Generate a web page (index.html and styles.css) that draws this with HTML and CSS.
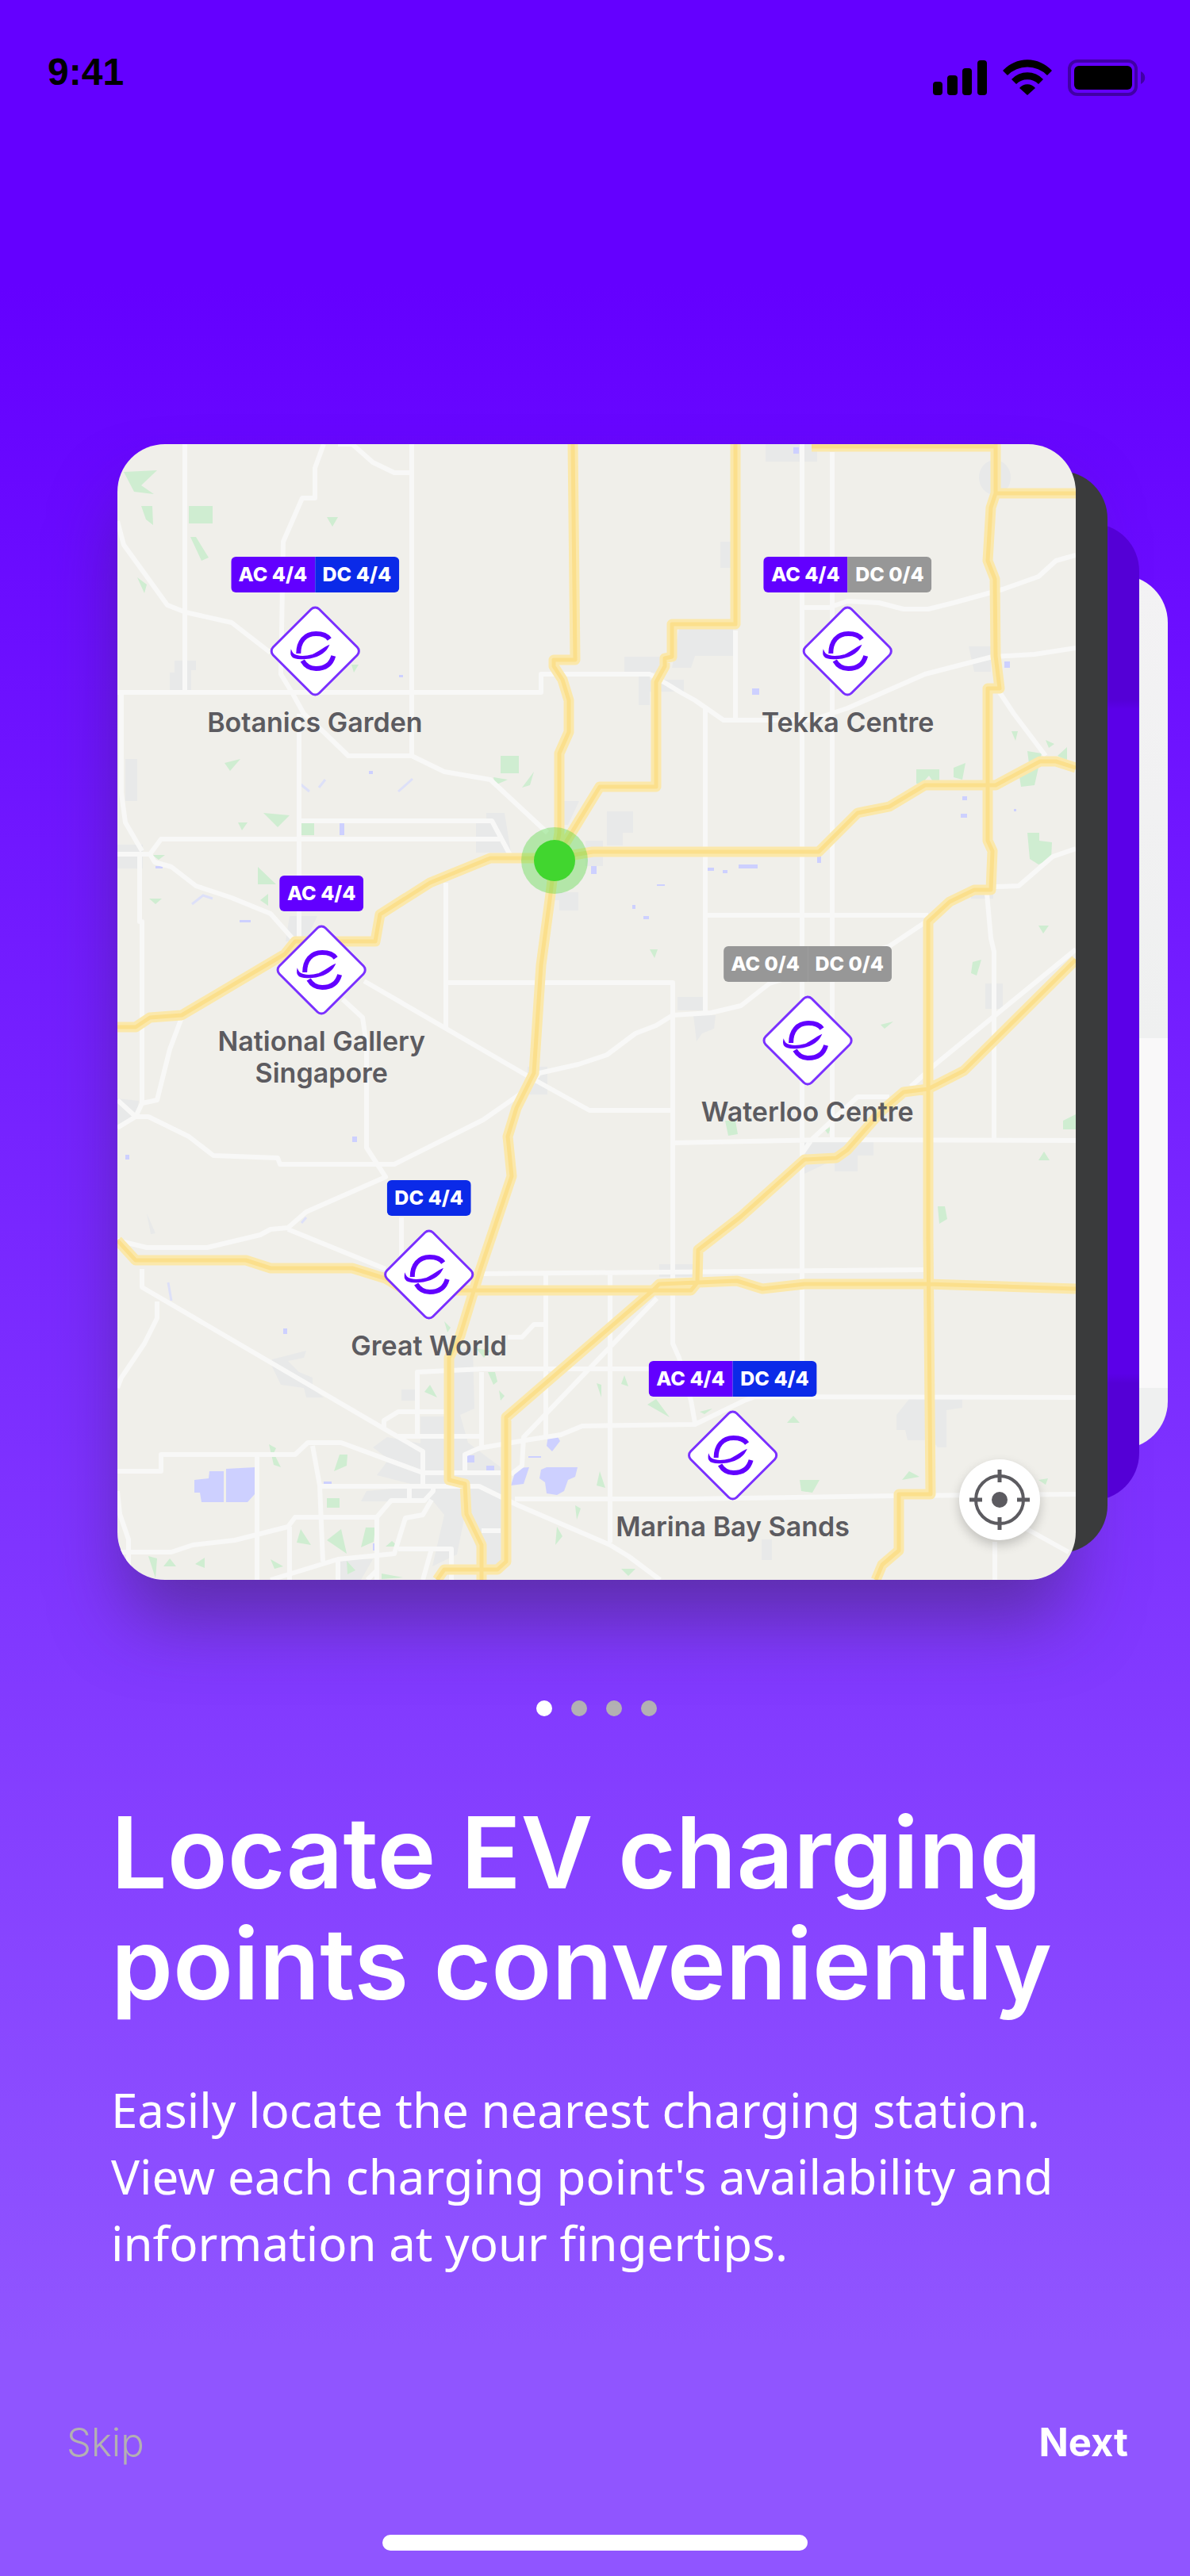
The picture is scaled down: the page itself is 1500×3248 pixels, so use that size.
FILE: index.html
```html
<!DOCTYPE html>
<html lang="en">
<head>
    <meta charset="UTF-8">
    <meta name="viewport" content="width=device-width, initial-scale=1.0">
    <title>Locate EV charging points</title>
    <link rel="stylesheet" href="styles.css">
</head>
<body>
    <!-- shared icon for the station pins -->
    <svg class="sprite" aria-hidden="true">
        <symbol id="station" viewBox="0 0 116 116">
            <rect x="17" y="17" width="82" height="82" rx="7" transform="rotate(45 58 58)" fill="#fff" stroke="#7a30ff" stroke-width="3"/>
            <g fill="none" stroke="#6200ff" stroke-width="6">
                <path d="M76 43 C72 37 66 36 59 36 C45 36 37 46 37 61"/>
                <path d="M42 70 C46 77 52 80 59 80 C70 80 78 75 81 64"/>
            </g>
            <path d="M28 59 C27 67 36 68 46 67 C60 66 70 60 74 52 C68 55 62 60 55 63 C44 66 31 66 28 59Z" fill="#6200ff" stroke="#6200ff" stroke-width="2"/>
        </symbol>
    </svg>

    <div class="screen">
        <header class="status">
            <span class="time">9:41</span>
            <div class="status-icons">
                <svg width="68" height="46" viewBox="0 0 68 46" aria-hidden="true">
                    <rect x="0" y="28" width="12" height="17" rx="4"/>
                    <rect x="18" y="20" width="13" height="25" rx="4"/>
                    <rect x="37" y="11" width="12" height="34" rx="4"/>
                    <rect x="56" y="1" width="12" height="44" rx="4"/>
                </svg>
                <svg width="62" height="46" viewBox="0 0 62 46" aria-hidden="true">
                    <path d="M0 14A42 42 0 0 1 62 14L56 20A35 35 0 0 0 6 20Z"/>
                    <path d="M11 25A27 27 0 0 1 51 25L45 31A20 20 0 0 0 17 31Z"/>
                    <path d="M21 36A13 13 0 0 1 41 36L31 45Z"/>
                </svg>
                <svg width="98" height="46" viewBox="0 0 98 46" aria-hidden="true">
                    <rect x="2" y="2" width="84" height="42" rx="10" fill="none" stroke="#000" stroke-width="4" opacity=".35"/>
                    <rect x="8" y="8" width="73" height="30" rx="6"/>
                    <path d="M92 15C99 18 99 28 92 31Z" opacity=".35"/>
                </svg>
            </div>
        </header>

        <main class="content">
            <div class="stack">
                <div class="card card-white"></div>
                <div class="card card-purple"></div>
                <div class="card card-dark"></div>
                <div class="map">
                    <svg class="map-art" viewBox="148 560 1208 1432" aria-hidden="true">
                        <!-- built-up areas -->
                        <g fill="#e8e9e9">
                            <path d="M214 848H220V833H247V845H241V870H214ZM787 828H840V848H787ZM805 850H819V889H805ZM158 957H173V1010H158ZM965 560H1030V582H965ZM908 683H921V716H908ZM856 792H924V827H876L871 842H847ZM1221 815H1249V847H1228ZM808 857H862V872H808ZM600 1037H613V1025H636L644 1075H600ZM765 1023H798V1050H785V1066H765ZM689 1125H729V1148H705V1135H689ZM705 1010H730L716 1040H705ZM738 1060H760V1092H738ZM854 1257H887V1274H854ZM874 1280H902L900 1297L885 1303L878 1313ZM1242 1240H1264V1272H1242ZM1014 1440H1101V1457H1081V1477H1052V1462L1014 1480ZM831 1594H874V1610H831ZM1130 1784L1146 1764H1213V1775L1193 1778V1825H1182L1175 1816H1144L1141 1803H1130ZM960 1941H973V1967H960Z"/>
                            <path d="M343 1714L386 1703L383 1712L363 1716L377 1730L394 1737V1751L408 1762H386L383 1750L354 1746L341 1719ZM573 1700H596L598 1776L580 1784L590 1819L631 1850L636 1980H613L600 1950L586 1910L576 1960L545 1975L560 1910L546 1893H455L462 1880L530 1874L475 1860L490 1840L470 1825L488 1812L530 1820V1786H560V1716ZM506 1752H525V1766H506ZM426 1966H470L455 1992H426ZM148 1385L175 1388L172 1408L148 1420ZM365 1155H400L385 1187H360ZM665 1345H690V1380H665ZM148 1065H180V1095H148ZM1224 1120H1252V1133H1224ZM185 1530L196 1555L190 1556Z"/>
                            <ellipse cx="1254" cy="602" rx="20" ry="22"/>
                        </g>
                        <!-- parks -->
                        <g fill="#cfedd1">
                            <path d="M156 595L198 593L178 612L194 623L169 620ZM238 638H268V660H238ZM178 638H192L193 662L184 655ZM412 652H426L419 664ZM240 677H247L263 703L254 707ZM173 728L185 737L182 748ZM283 962L303 957L290 972ZM631 953H654V975H631ZM622 980L640 983L624 990ZM673 973L668 990L658 993ZM332 1025L365 1028L350 1043ZM380 1037H396V1053H380ZM325 1093L348 1115H325ZM300 1037H312L305 1047ZM192 1078H208L200 1084ZM328 1135L338 1127V1142ZM188 1133H204L196 1140ZM819 1197H829L825 1208ZM443 838H452L446 848Z"/>
                            <path d="M1155 970H1184V987H1177L1171 978L1162 988H1155ZM1202 968L1217 962L1213 983L1202 980ZM1295 947L1313 950L1304 990L1287 992L1284 973L1298 970ZM1275 922H1283L1280 934ZM1333 953L1345 942V959ZM1318 933L1329 938L1322 943ZM1295 1050H1310V1060L1326 1062L1325 1083L1309 1090L1298 1083ZM1309 1167H1322L1315 1177ZM1226 1213L1237 1210L1231 1230L1224 1227ZM1110 1292L1126 1288L1115 1297ZM914 1413H927L930 1430L918 1432ZM1340 1413L1356 1405V1424H1340ZM1316 1452L1323 1463H1309ZM1182 1521H1191L1194 1537L1184 1543ZM827 1764L816 1771L844 1787ZM992 1794L1000 1785L1008 1794ZM1008 1866H1033L1024 1882L1010 1880ZM1137 1866L1146 1855L1159 1862ZM1309 1866L1321 1864L1318 1872ZM882 1780L898 1776L888 1783ZM1040 1425L1048 1420L1044 1430Z"/>
                            <path d="M339 1821L348 1826L345 1832L354 1850L345 1847ZM428 1834H438L437 1848L421 1855ZM412 1889H428V1901H412ZM412 1942L430 1928L437 1959ZM461 1926H473L471 1944L455 1951ZM379 1928L392 1948L374 1945ZM187 1962L198 1965L196 1990ZM206 1975L214 1965L222 1975ZM246 1972L258 1964V1977ZM341 1966L357 1975L346 1978ZM437 1968L448 1980L438 1985ZM481 1984L508 1989L481 1991ZM486 1950L494 1943L502 1950ZM756 1855L763 1876L752 1873ZM752 1744L758 1746V1762ZM787 1734L792 1748L783 1745ZM542 1746L551 1762L535 1755ZM615 1730H624L627 1742L622 1746ZM629 1753L636 1760L631 1766ZM702 1925L709 1937L700 1948ZM783 1978H801L792 1987ZM725 1898L732 1902L727 1916ZM560 1666L568 1674L564 1680ZM600 1700L618 1703L610 1712Z"/>
                        </g>
                        <!-- water -->
                        <g fill="#cdd0ff">
                            <path d="M245 1866L263 1864L264 1855H282V1894H254L252 1882H245ZM285 1852L322 1850L321 1884L312 1894H285ZM691 1810H702L706 1817L696 1830L689 1823ZM651 1851L667 1850L660 1871L644 1873ZM682 1853L689 1850H728L725 1862L716 1866L711 1880L702 1885L689 1883L687 1869L680 1864ZM589 1835H598V1844H589ZM613 1848H623V1855H613ZM428 1037H434V1053H428ZM948 868H957V876H948ZM1266 834H1273V842H1266ZM1000 564H1007V572H1000ZM745 1092H752V1102H745ZM931 1090H955V1095H931ZM911 1097H917V1101H911ZM892 1094H900V1098H892ZM1030 1076H1035V1088H1030ZM1213 1004H1219V1009H1213ZM1211 1026H1219V1031H1211ZM503 851H508V854H503ZM465 972H470V976H465ZM357 1675H362V1682H357ZM444 1433H450V1440H444ZM797 1141H801V1146H797ZM811 1155H818V1159H811ZM158 1456H163V1462H158ZM1278 1020H1281V1023H1278ZM408 1868H418V1871H408ZM470 1946H475V1955H470ZM666 1836H682V1838H666ZM196 1092H205V1095H196ZM828 1115H838V1117H828ZM302 1160H316V1163H302Z"/>
                            <path d="M242 1140L256 1129L268 1133M502 998L520 982M402 993L410 983M378 988L390 998M212 1617L216 1640M386 1535L380 1542" fill="none" stroke="#dde0f8" stroke-width="3"/>
                        </g>
                        <!-- minor roads -->
                        <g fill="none" stroke="#f8f8f7" stroke-width="6" stroke-linejoin="round">
                            <path d="M233 560V872M519 560V955M426 560H444L470 583L497 596H519M408 560L397 590V628H381L357 683L354 850L368 873L383 900L408 923L439 953H519L560 973L618 983L690 1050"/>
                            <path d="M148 657L156 687L180 720L211 763L234 772L292 785L341 823M148 873H682V850H819L840 862L858 873L876 883L912 908H1023L1068 893L1166 850L1251 828L1304 825L1356 817"/>
                            <path d="M153 873V1000L158 1037L179 1073M148 1077H189L203 1058H630M379 1035H620L644 1080M377 900V1183M189 1077L195 1087L216 1093L247 1117L292 1132L341 1152L372 1187M176 1077V1162H179V1391L171 1408L148 1422M148 1387L171 1408H187L238 1433L269 1457L350 1460L353 1468H497L609 1412L665 1373L680 1353L729 1342L765 1330L801 1303L827 1293L848 1280L896 1277L934 1268L970 1240L1121 1193L1166 1163"/>
                            <path d="M229 1283L214 1323L198 1387L179 1391M459 1237L671 1360L743 1400H848M562 1113V1295M564 1239H848V1694L856 1712L871 1766L876 1794M432 1260L457 1283L462 1317V1447L486 1484L386 1528L363 1548L341 1550L328 1557L261 1573H185L148 1564M363 1550L486 1600M179 1600V1623L533 1830V1873M198 1641V1662L182 1694L153 1737L148 1750M506 1535V1600M609 1606L1166 1601M688 1606V1810M769 1606V1945"/>
                            <path d="M1011 560V1726M1049 570V1440M927 795V908M889 890V1277M1010 766H1045L1068 758L1108 760L1139 768H1170L1202 760L1264 743L1309 727L1331 707L1356 700M1260 873L1278 900L1318 953M1255 1118L1284 1117L1327 1080L1356 1070M1244 1127L1249 1183L1253 1200V1437M889 1154H1170M1356 1197L1179 1342L1148 1370M1121 1383H1081L1023 1437L1012 1453M848 1441L1037 1437L1356 1438"/>
                            <path d="M640 1686H658L673 1670H688M526 1812V1730L609 1726H889M607 1730V1825M484 1801V1791L502 1780H560M502 1811H609M828 1637L660 1812L658 1848L644 1859M586 1857V1834L604 1826L662 1816L707 1809L734 1798L876 1796L938 1766L952 1761L1356 1762M148 1855H203V1834H372L388 1819H430L533 1857H631M324 1834V1992M394 1823L403 1873L407 1969M403 1874H604L653 1898L769 1948L792 1962L832 1992M649 1890H867L1128 1886L1356 1884"/>
                            <path d="M148 1880L151 1909L162 1941V1992M148 1957H216L243 1948L296 1942L363 1925L372 1913H475L493 1892H535L546 1880V1874M516 1874V1892M365 1925V1992M475 1913V1992M341 1992L426 1966L497 1959L511 1914L533 1910L544 1891M502 1953H569V1992M426 1966V1992M544 1953L533 1992M463 1992L475 1980M607 1930H631M1291 1926L1347 1957M1254 1944V1992"/>
                        </g>
                        <!-- highways -->
                        <g fill="none" stroke="#fbe8ab" stroke-width="13" stroke-linejoin="round">
                            <path id="highways" d="M722 560L725 832H698V840L709 857L717 883V923L705 950V1050L699 1085L756 992H827V860L838 840V830L847 828V787H927V560M1023 563H1255V622H1356M1255 560V622L1249 640L1245 707L1254 730L1255 827L1260 868H1245V1060L1251 1073L1249 1122H1228L1197 1137L1170 1162V1560L1173 1884H1133V1955L1112 1973L1104 1992M1356 968L1331 960H1311L1255 990H1166L1121 1017L1081 1025L1032 1074H747L699 1082H618L542 1113L479 1153L473 1187H372L359 1203L229 1280L189 1283L171 1295H148M699 1085L694 1127L682 1217L673 1353L651 1397L640 1433L645 1483L604 1605L580 1684L566 1712V1866L586 1871L588 1909L607 1948V1992M148 1564L171 1589H310L341 1599H444L486 1612L511 1627H871L880 1616M823 1627L831 1619L929 1615L961 1625L1014 1619H1170L1356 1625M1356 1210L1215 1350L1170 1373L1139 1377L1112 1400L1068 1450L1054 1460L1014 1462L934 1534L880 1576L879 1616M823 1627L638 1787V1969L627 1979H560L551 1992"/>
                            <use href="#highways" stroke="#fbdf8c" stroke-width="5"/>
                        </g>
                        <!-- current position -->
                        <circle cx="699" cy="1085" r="42" fill="#41d62f" opacity=".35"/>
                        <circle cx="699" cy="1085" r="26" fill="#41d62f"/>
                    </svg>

                    <div class="pin botanics">
                        <div class="badge"><span class="ac">AC 4/4</span><span class="dc">DC 4/4</span></div>
                        <svg class="marker"><use href="#station"/></svg>
                        <div class="label">Botanics Garden</div>
                    </div>
                    <div class="pin tekka">
                        <div class="badge"><span class="ac">AC 4/4</span><span class="off">DC 0/4</span></div>
                        <svg class="marker"><use href="#station"/></svg>
                        <div class="label">Tekka Centre</div>
                    </div>
                    <div class="pin gallery">
                        <div class="badge"><span class="ac">AC 4/4</span></div>
                        <svg class="marker"><use href="#station"/></svg>
                        <div class="label">National Gallery<br>Singapore</div>
                    </div>
                    <div class="pin waterloo">
                        <div class="badge"><span class="off">AC 0/4</span><span class="off">DC 0/4</span></div>
                        <svg class="marker"><use href="#station"/></svg>
                        <div class="label">Waterloo Centre</div>
                    </div>
                    <div class="pin great-world">
                        <div class="badge"><span class="dc">DC 4/4</span></div>
                        <svg class="marker"><use href="#station"/></svg>
                        <div class="label">Great World</div>
                    </div>
                    <div class="pin marina">
                        <div class="badge"><span class="ac">AC 4/4</span><span class="dc">DC 4/4</span></div>
                        <svg class="marker"><use href="#station"/></svg>
                        <div class="label">Marina Bay Sands</div>
                    </div>

                    <button class="locate" type="button" aria-label="My location">
                        <svg width="80" height="80" viewBox="0 0 80 80" fill="none" stroke="#5c5b60" stroke-width="4" aria-hidden="true">
                            <circle cx="40" cy="40" r="30"/>
                            <path d="M40 2V18M40 62V78M2 40H18M62 40H78" stroke-width="5"/>
                            <circle cx="40" cy="40" r="10" fill="#5c5b60" stroke="none"/>
                        </svg>
                    </button>
                </div>
            </div>

            <nav class="dots" aria-label="Slides">
                <button class="dot active" type="button" aria-label="Slide 1"></button>
                <button class="dot" type="button" aria-label="Slide 2"></button>
                <button class="dot" type="button" aria-label="Slide 3"></button>
                <button class="dot" type="button" aria-label="Slide 4"></button>
            </nav>

            <h1>Locate EV charging points conveniently</h1>
            <p>Easily locate the nearest charging station. View each charging point's availability and information at your fingertips.</p>
        </main>

        <footer class="actions">
            <button class="skip" type="button">Skip</button>
            <button class="next" type="button">Next</button>
        </footer>
        <div class="home-bar"></div>
    </div>
</body>
</html>
```

FILE: styles.css
```css
* {
    box-sizing: border-box;
}
body {
    margin: 0;
    font-family: Inter, "Liberation Sans", sans-serif;
    color: #fff;
}
button {
    padding: 0;
    border: none;
    background: none;
    font-family: inherit;
    cursor: pointer;
}
.sprite {
    display: none;
}
.screen {
    display: flex;
    flex-direction: column;
    min-height: 100vh;
    overflow: hidden;
    background: linear-gradient(#6400ff 11%, #9055ff 91%);
}

/* status bar */
.status {
    display: flex;
    justify-content: space-between;
    padding: 64px 56px 0 60px;
    color: #000;
}
.time {
    font: bold 48px/54px "Liberation Sans", Arial, sans-serif;
}
.status-icons {
    display: flex;
    gap: 20px;
    padding-top: 11px;
}

/* card stack */
.content {
    padding: 439px 144px 0 148px;
}
.stack {
    position: relative;
    border-radius: 60px;
    box-shadow: 0 60px 90px -10px rgba(60, 40, 90, 0.5);
}
.card {
    position: absolute;
    width: 300px;
    border-radius: 60px;
}
.card-dark {
    top: 34px;
    right: -40px;
    bottom: 34px;
    background: #3a3b3c;
}
.card-purple {
    top: 100px;
    right: -80px;
    bottom: 100px;
    background: linear-gradient(#5400d6 18%, #5b00e8 19%, #5b00e8 87%, #5400d6 88%);
}
.card-white {
    top: 165px;
    right: -116px;
    bottom: 165px;
    background: linear-gradient(#f3f2f4 0%, #eff0f0 53%, #f9f8f9 53%, #f9f8f9 93%, #eff0f0 93%);
}
.map {
    position: relative;
    aspect-ratio: 1208 / 1432;
    border-radius: 60px;
    background: #f0efea;
}
.map-art {
    display: block;
    width: 100%;
    height: 100%;
    border-radius: 60px;
}

/* map pins */
.pin {
    position: absolute;
    display: flex;
    flex-direction: column;
    align-items: center;
    transform: translateX(-50%);
}
.botanics {
    left: 20.6%;
    top: 9.9%;
}
.tekka {
    left: 76.2%;
    top: 9.9%;
}
.gallery {
    left: 21.3%;
    top: 38%;
}
.waterloo {
    left: 72%;
    top: 44.2%;
}
.great-world {
    left: 32.5%;
    top: 64.8%;
}
.marina {
    left: 64.2%;
    top: 80.7%;
}
.badge {
    display: flex;
    border-radius: 6px;
    overflow: hidden;
    font-size: 25px;
    font-weight: 800;
    line-height: 45px;
    text-align: center;
    white-space: nowrap;
}
.badge span {
    width: 106px;
}
.ac {
    background: #6200ff;
}
.dc {
    background: #0b2ae8;
}
.off {
    background: #979797;
}
.marker {
    width: 116px;
    height: 116px;
    margin: 16px 0 12px;
}
.label {
    color: #5c5b60;
    font-size: 34px;
    font-weight: 600;
    line-height: 40px;
    text-align: center;
    white-space: nowrap;
}
.locate {
    position: absolute;
    right: 45px;
    bottom: 50px;
    display: flex;
    align-items: center;
    justify-content: center;
    width: 102px;
    height: 102px;
    border-radius: 50%;
    background: #fff;
    box-shadow: 0 6px 14px rgba(0, 0, 0, 0.2);
}

/* slide text */
.dots {
    display: flex;
    justify-content: center;
    gap: 24px;
    padding: 152px 0 102px;
}
.dot {
    width: 20px;
    height: 20px;
    border-radius: 50%;
    background: #b3b0b3;
}
.dot.active {
    background: #fff;
}
h1 {
    margin: 0 -20px 0 -8px;
    font-size: 125px;
    font-weight: 600;
    line-height: 140px;
}
p {
    margin: 72px 0 0 -8px;
    font-family: "Noto Sans", "Open Sans", sans-serif;
    font-size: 60px;
    line-height: 84px;
}

/* bottom bar */
.actions {
    display: flex;
    justify-content: space-between;
    margin-top: auto;
    padding: 0 78px 86px 84px;
}
.actions button {
    color: #fff;
    font-size: 49px;
    font-weight: 700;
    line-height: 60px;
}
.actions .skip {
    color: #b3b0b3;
    font-weight: 300;
}
.home-bar {
    width: 536px;
    height: 20px;
    margin: 0 auto 32px;
    border-radius: 10px;
    background: #fff;
}
```
